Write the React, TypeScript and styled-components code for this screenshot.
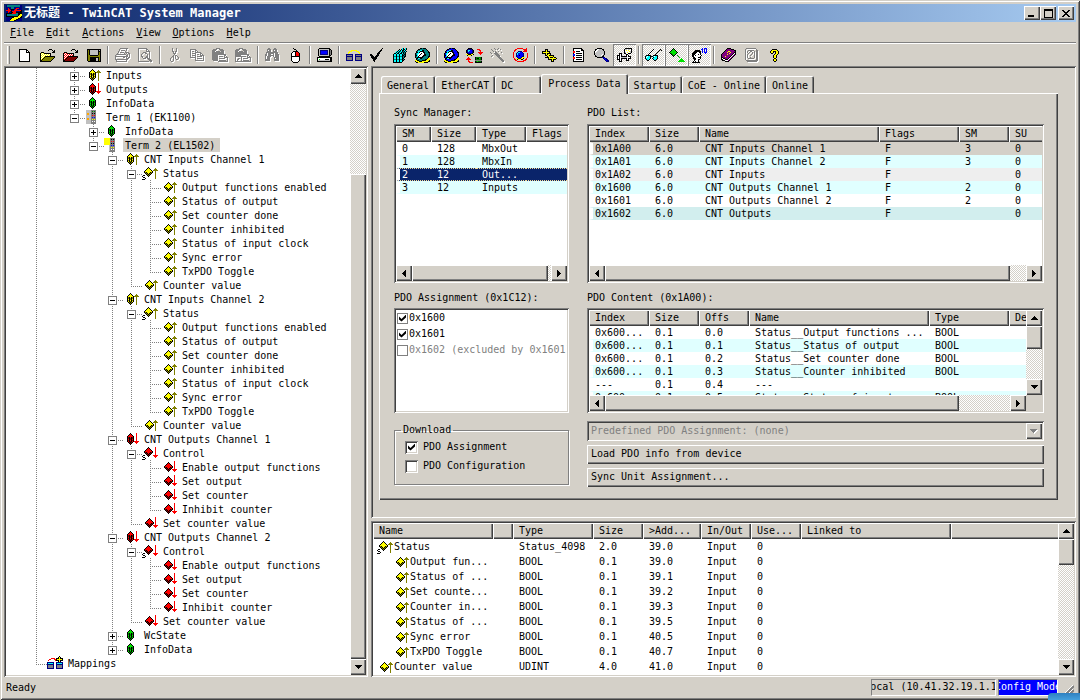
import React from "react";
import styled, { createGlobalStyle, css } from "styled-components";

/* ---------- theme values ---------- */

const face = "#d4d0c8";
const shade = "#808080";
const dark = "#404040";

const raised = css`
  background: ${face};
  box-shadow: inset 1px 1px 0 #fff, inset -1px -1px 0 ${dark}, inset -2px -2px 0 ${shade};
`;
const sunken = css`
  padding: 2px;
  box-shadow: inset 1px 1px 0 ${shade}, inset -1px -1px 0 #fff, inset 2px 2px 0 ${dark}, inset -2px -2px 0 ${face};
`;
const hatch = css`
  background: repeating-conic-gradient(#fff 0 25%, ${face} 0 50%) 0 0 / 2px 2px;
`;

const GlobalStyle = createGlobalStyle`
  *, *::before, *::after { box-sizing: border-box; }
  body { margin: 0; background: ${face}; }
  body, button, input, select {
    font: 10px/14px "DejaVu Sans Mono", "Liberation Mono", "Noto Sans CJK SC", monospace;
    color: #000;
  }
  button { border: 0; padding: 0; }
`;

/* ---------- pixel drawings ---------- */

const inks: Record<string, string> = {
  K: "#000", W: "#fff", Y: "#ffff00", O: "#808000", R: "#ff0000", D: "#800000",
  B: "#0000ff", N: "#000080", C: "#00ffff", T: "#008080", G: "#808080", L: "#c0c0c0",
  g: "#00e000", E: "#008000", P: "#800080", A: "#ffa500",
};

type Palette = Record<string, string>;

const Pixels = ({ rows, palette = {} }: { rows: string[]; palette?: Palette }) => {
  const out: React.ReactElement[] = [];
  rows.forEach((row, y) => {
    let x = 0;
    while (x < row.length) {
      const c = row[x];
      let end = x + 1;
      while (end < row.length && row[end] === c) end++;
      if (c !== "." && c !== " ")
        out.push(<rect key={`${x}-${y}`} x={x} y={y} width={end - x} height={1} fill={palette[c] ?? inks[c]} />);
      x = end;
    }
  });
  return <>{out}</>;
};

const Drawing = styled.svg`
  display: block;
  flex: none;
  shape-rendering: crispEdges;
`;

const widthOf = (rows: string[]) => Math.max(...rows.map((r) => r.length));

const Bitmap = ({ rows, palette, disabled }: { rows: string[]; palette?: Palette; disabled?: boolean }) => {
  const w = widthOf(rows) + (disabled ? 1 : 0);
  const h = rows.length + (disabled ? 1 : 0);
  const white: Palette = {};
  Object.keys(inks).forEach((k) => (white[k] = "#fff"));
  return (
    <Drawing width={w} height={h} viewBox={`0 0 ${w} ${h}`} aria-hidden>
      {disabled && (
        <g transform="translate(1 1)">
          <Pixels rows={rows} palette={white} />
        </g>
      )}
      <Pixels rows={rows} palette={palette} />
    </Drawing>
  );
};

const LEAF = [
  "", "", ".......K", "......K1K", ".....K111K", "....K11111K", "...K1111111K", "...KsK111KsK",
  "....KsK1KsK", ".....KsKsK", "......KsK", ".......K",
];
const STACK = [
  "", ".......K", "......K1K", ".....K111K", "....K11111K", "....KsK1KsK", "....KsKsKsK", "....K1KsK1K",
  "....KsK1KsK", "....K1KsK1K", ".....KsKsK", "......KsK", ".......K",
];
const STRUCT = [
  "", "......K", ".....K1K", "....K111K", "...K11111K", "..K1111111K", "..KsK111KsK", "...KsK1KsK",
  "....KsKsK", ".KK..KsK", "K.....K", ".KK", "...K", "KKK",
];
const UP = [
  "", "", ".............U", "............UUU", "...........UUUUU", ".............U", ".............U",
  ".............U", ".............U", ".............U", ".............U", ".............U", ".............U",
];
const DOWN = [
  "", ".............U", ".............U", ".............U", ".............U", ".............U", ".............U",
  ".............U", ".............U", "...........UUUUU", "............UUU", ".............U",
];
const TERM = [
  "....GGGGGG", "....LGKGKG", "....LGGGGG", "....LGRGRG", "....LGGGGG", "....LGKGKG", "....LGGGGG",
  "....LGBGBG", "....LGGGGG", "....LGYGYG", "....LGGGGG", "....LGWGWG", "....LGGGGG", "....GGGGGG",
];
const COUPLER = [
  "LLLLLGGGGG", "LLLLLGEGEG", "LLLLLGGGGG", "LAALLGKGKG", "LAALLGGGGG", "LLLLLGRGRG", "LLLLLGGGGG",
  "LLLLLGBGBG", "LAALLGGGGG", "LAALLGYGYG", "LLLLLGGGGG", "LLLLLGWGWG", "LLLLLGGGGG", "LLLLLGGGGG",
];
const MAPPINGS = [
  "............K", "...........KYK", "....RRRR.KKKYKKK", "..RR...RRKYYYYYK", ".R......RKKKYKKK",
  "...........KYK", "NNNNNNN..NNNNNNN", "NCCCCCN..NCCCCCN", "NNNNNNN..NNNNNNN", "NGGGGGN..NGGGGGN",
  "NGGGGGN..NGGGGGN", "NGGGGGN..NGGGGGN", "NNNNNNN..NNNNNNN",
];

const faces: Record<string, string> = { y: "#ffff00", r: "#ff0000", g: "#00e000" };
const sides: Record<string, string> = { y: "#808000", r: "#800000", g: "#008000" };

const TreeIcon = ({ kind }: { kind: string }) => {
  const [shape, hue] = kind.split("-");
  const body = ({ leaf: LEAF, stack: STACK, struct: STRUCT } as Record<string, string[]>)[shape];
  return (
    <Drawing width={16} height={14} viewBox="0 0 16 14" aria-hidden>
      {hue === "y" && <Pixels rows={UP} palette={{ U: "#808000" }} />}
      {hue === "r" && <Pixels rows={DOWN} palette={{ U: "#ff0000" }} />}
      {body && <Pixels rows={body} palette={{ "1": faces[hue], s: sides[hue] }} />}
      {shape === "coupler" && <g transform="translate(1 0)"><Pixels rows={COUPLER} /></g>}
      {shape === "term" && (
        <g transform="translate(1 0)">
          <Pixels rows={TERM} />
          <rect x={-1} y={0} width={6} height={7} fill="#ffff00" />
        </g>
      )}
      {shape === "map" && <Pixels rows={MAPPINGS} />}
    </Drawing>
  );
};

const LOGO = [
  "NTTTTTTTTTTTTTNN", "NTTTTTTTTTTTTTNN", "NNNNNTTTNNNNNNNN", "NNRNNTTTNNRRRNNN", "NNRRNKKKNRRNNNNN",
  "RRRRRKNNRRRRRRRK", "NNRRNKRRRRNNNNKK", "NNRNNKKRRRKKKKKK", "KKKKKKRRRRTTKKKK", "KTTTTTTTTTTTKKYY",
  "KTTTTTTTTTTTKYYY", "KKKKKKKKKKKKYYYK", "NNNNNNKKYYYYYYKK", "NNNNNKYYYYYYKKNN", "NNNNKYYYYYKKNNNN", "NNNNYYYYKKNNNNNN",
];

const page = "KWWWWWWWWWK";
const ICONS: Record<string, string[]> = {
  new: ["KKKKKKKK", "KWWWWWWKK", "KWWWWWWKWK", "KWWWWWWKKKK", page, page, page, page, page, page, page, page, "KKKKKKKKKKK"],
  open: [
    ".........KKK", "........K...K.K", ".............KK", ".KKK........KKK", "KYWYKKKKKKK", "KWYWYWYWYWK",
    "KYWYWYWYWYK", "KWYWYKKKKKKKKKK", "KYWYKOOOOOOOOOK", "KWYKOOOOOOOOOK", "KYKOOOOOOOOOK", "KKOOOOOOOOOK", "KKKKKKKKKKK",
  ],
  save: [
    "KKKKKKKKKKKKKK", "KOKLLLLLLLLKLK", "KOKLLLLLLLLKKK", "KOKLLLLLLLLKOK", "KOKLLLLLLLLKOK", "KOKLLLLLLLLKOK",
    "KOOKKKKKKKKOOK", "KOOOOOOOOOOOOK", "KOOKKKKKKKKKOK", "KOOKKKKKKLLKOK", "KOOKKKKKKLLKOK", "KOOKKKKKKLLKOK", ".KKKKKKKKKKKKK",
  ],
  print: [
    ".....GGGGGGGG", "....G......G", "....G.GGGG.G", "...G......G", "...G.GGGG.GGGG", "..G......G.G.GG",
    ".GGGGGGGGGG.G.G", "G..........GG.G", "GGGGGGGGGGGGG.G", "G.......GG.G.GG", "G..........GGG", "GGGGGGGGGGGGG", ".G.........G", ".GGGGGGGGGGG",
  ],
  preview: [
    "GGGGGGGGG", "G.......GG", "G.......G.G", "G.......GGGG", "G....GGG...G", "G...G..GG..G", "G..G.....G.G",
    "G..G.....G.G", "G..GG...GG.G", "G...G..GGG.G", "G....GGG.GGG", "G.........GGG", "G..........GGG", "GGGGGGGGGGG.GG",
  ],
  cut: [
    "..G...G", "..G...G", "..G...G", "..GG.GG", "...G.G", "...GGG", "....G", "...G.GG", "..GG.G.G", ".G.G.G..G",
    "G..G.G..G", "G..G..GG", "G..G", ".GG",
  ],
  copy: [
    "GGGGGG", "G....GG", "G.GG.G.G", "G....GGGGGG", "G.GGGG....GG", "G....G.GG.G.G", "G.GGGG....GGGG", "G....G.GGGGG.G",
    "GGGGGG.......G", ".....G.GGGGG.G", ".....G.......G", ".....GGGGGGGGG",
  ],
  paste: [
    "....GGGG", ".GGGG..GGGG", "GGGG....GGGG", "GGG.GGGG.GGG", "GGGGGGGGGGGG", "GGGGGGGGGGGG", "GGGGGGGGGGGGGG",
    "GGGGGG......GG", "GGGGGG.GGGG.G.G", "GGGGGG......GGGG", "GGGGGG.GGGGGG..G", "GGGGGG.........G", ".GGGGG.GGGGGGG.G", "......GGGGGGGGGG",
  ],
  pasteLink: [
    "....GGGG", ".GGGG..GGGG", "GGGG....GGGG", "GGG.GGGG.GGG", "GGGGGGGGGGGG", "GGGGGGGGGGGG", "GGGGGGGGGGGGGG",
    "GGGGGG......GG", "GGGGGGGGGGG.G.G", "G.....G.....GGGG", "G..GG.G.GGGGG..G", "G.GG..G........G", "G.G...G.GGGGGG.G", "GGGGGGGGGGGGGGGG",
  ],
  find: [
    "...GG....GG", "..GGGG..GGGG", "..G.GG..G.GG", "..GGGG..GGGG", ".GGGGGGGGGGGG", ".G.GGGGGG.GGG", "GG.GGG..G.GGGG",
    "GG.GGGGGG.GGGG", "G.GGGG..G.GGGG", "G.GGG....GGGGG", "G.GGG....G.GGG", "GGGGG....GGGGG", "GGGGG....GGGGG",
  ],
  mouse: [
    "..K", "...KK", ".....K", "..KKKKK", ".KWWKRRK", "KWWWKRRRK", "KWWWKRRRK", "KWWWKRRRK", "KKKKKKKKK", "KWWWWWWWK",
    "KWWWWWWWK", "KWWWWWWWK", "KWWWWWWWK", ".KWWWWWK", "..KKKKK",
  ],
  pc: [
    "..KKKKKKKKKKK", ".KLLLLLLLLLLKK", ".KLNNNNNNNNLKGK", ".KLNBBBBBBNLKGK", ".KLNBBBBBBNLKGK", ".KLNBBBBBBNLKGK",
    ".KLNNNNNNNNLKGK", ".KLLLLLLLLLLKK", "..KKKKKKKKKKK", "KKKKKKKKKKKKKKK", "KWWWWWWWWWWWWKK", "KWgWWWWWKKKKWKK", "KLLLLLLLLLLLLKK", "KKKKKKKKKKKKKKK",
  ],
  link: [
    ".....YYYYYY", "...YYY....YYY", "..YY........YY", "..Y..........Y", "NNNNNNN..NNNNNNN", "NGGGGGN..NGGGGGN",
    "NNNNNNN..NNNNNNN", "NGGGGGN..NGGGGGN", "NGGGGGN..NGGGGGN", "NGGGGGN..NGGGGGN", "NNNNNNN..NNNNNNN",
  ],
  check: [
    "............K", "...........K", "..........KK", ".........KK", "........KK", ".......KKK", "KK.....KK", "KKK...KKK",
    ".KKK.KKK", ".KKKKKK", "..KKKKK", "...KKK", "...KK", "....K",
  ],
  cube: [
    "..........CK.CK", ".......K.KCKKCK", "......KCKCKKCK", "....CKCKTCKTKCK", "...CKCKTCKTKTK", "..KKCKKCKKCKTK", ".KCCKCCKCCKTKK",
    ".KCCKCCKCCKKTK", ".KTTKTTKTTKTKK", ".KCCKCCKCCKTK", ".KCCKCCKCCKK", ".KTTKTTKTTKTK", ".KCCKCCKCCKK", ".KCCKCCKCCK", ".KKKKKKKKK",
  ],
  gear: [
    ".....KKTKKK", "...KKTTTTTTK", "..KTTCCKKTTTK", ".KTCCKKKKTTTTK", ".KKCKWWWKKTTTKK", "KTCCWWKWWKTTTTK", "KTCWWKWWWKKTTTK",
    "KKCWKWWWKKKTTTK", "KTCKWWWKKTTTTKK", "KTKKKKKKTTTTTK", ".KKCCKKTTTTTKYY", ".KTTTTTTTTKKYYY", "YYKKTTTKKKKYYYK", "KYYYKKKYYYYYYKK", ".KKYYYYYYKKKK",
  ],
  reload: [
    "..KKKK", ".KNNNNK....RRR", "KNCCBBNK.....RR", "KNCBBBNK......R", "KNBBBBNK....RRRRR", ".KNNNNK......RRR", "YYKKKYYK......R",
    ".KYYYK", "", "..R......KEEEEEK", ".RRR.....KEKKgEK", "RRRRR....KEEEEEK", "..R......GGGGGGG", "..RR.....KEgEEEK", "...RRRR..KKKKKKK",
  ],
  wand: [
    "....G...G", ".G...G.G..G", "..G.......", "...G.G..G.", "G....GG....G", ".G..GGGG", ".....GGGG", "..G...GGGG",
    ".G.....GGG", "........GGG", ".........GGG", "..........GGG", "...........GGG", "............GG",
  ],
  target: [
    "....RRRRRR...R", "..RR......RRRR", ".RR........RRR", ".R...NNNN.RRRR", "R...NCCBBN", "R..NCBBBBBN...R", "R..NCBBBBBN...R",
    "R..NBBKBBBN...R", "R..NBBBBBNN...R", "R...NBBBNYYY..R", ".R.YYNNNYYK..R", ".RR.KYYYKK..RR", "..RR......RRR", "....RRRRRRR",
  ],
  plus: [
    "...KKK", "...KYK", "KKKKYKKK", "KYYYYYYK", "KKKKYKKKK", "...KYKYYK", "...KKYYKKKKK", ".....KYYYYYK", "...KKKKYKKKYKK",
    "......KYYYYYYYK", "......KKKKYKKK", ".........KYK", ".........KKK",
  ],
  list: [
    "KKKKKKKKK", "KWWWWWWWKK", "KWWWWWWWKKK", "RRWKKKKWWWK", "RRWWWWWWWWK", "KWWKKKKKKWK", "BBWWWWWWWWK", "BBWKKKKKKWK",
    "KWWWWWWWWWK", "RRWKKKKKKWK", "RRWWWWWWWWK", "KWWKKKKKKWK", "KWWWWWWWWWK", "KKKKKKKKKKK",
  ],
  zoom: [
    "...KKKKK", ".KKWWLLLKK", ".KWWLLLLLK", "KWWLLLLLLLK", "KWLLLLLLLLK", "KLLLLLLLLLK", "KLLLLLLLWLK", ".KLLLLLWLK", ".KKLLLLLKK",
    "...KKKKKNNN", ".........NBNN", "..........NBNN", "...........NBNN", "............NNN",
  ],
  tool: [
    "........KKKKKKK", ".......KLLWLLWK", ".......KWYWYWWK", ".......KWWWWYLK", ".......KLWYWWLK", "..KKK..KKWWKKK", "..KWK....KK",
    "KKKWK....KWK", "KWKWKKKKKKWKKK", "KWKWLLLLLLWWWK", "KWKWKKKKKKWKKK", "KKKWK....KWK", "..KWK....KKK", "..KKK",
  ],
  glasses: [
    "........K......K", ".......K......K.K", "......K......K", ".....K......K", "....K......K", "...K......K", ".KKKKK..KKKKK", "KCWCCKKKCWCCK",
    "KWCCCK..KCCCK", "KCCCCK.KCCCCK", ".KCCK...KCCK", "..KK.....KK",
  ],
  watch: [
    "....K", "...KgK", "..KgggK", ".KgggggK", "KgggggggK", ".KEggggK", "..KEggK", "...KEK..E", "....K....E", "..........g",
    "............g", "...........ggg", "..........ggggg", ".........ggggggg",
  ],
  iq: [
    "..........B.BBB", ".........BB.B.B", "...KKKKK..B.B.B", "..KKKKKKK.B.B.B", ".KKKKWWKK.B.BBB", "KKKKWWWWK....B", "KKKWWWKWK", "KKWKWWWWWK",
    "KKWWWWWWK", ".KKWWWKKK", ".KKKWWWWK", "..KKWWKK", "..KWWWK", ".KWKWWK", "KKKKKKKK",
  ],
  book: [
    "......KKKK", ".....KPPPPKKK", "....KPPPPPPPPKK", "...KPPPYYPPPPPK", "..KPPPYPPYPPPKK", ".KPPPPPPYPPPKWK", "KPPPPPYPPPPKWPK",
    "KPPPPPPPPPKWPK", "KPPPYPPPPKWPK", "KKPPPPPPKWPK", "KWKKPPPKWPK", "KKWWKKKWPK", ".KKKWWWPK", "....KKKK",
  ],
  doc: [
    ".GGGGGGGGGG", "G..........G", "G..GGGGGG..GG", "G.G..GG..G.GG", "G.G.G..G.G.GG", "G..G...G.G.GG", "G.G...G..G.GG",
    "G.G..G...G.GG", "G.G......G.GG", "G.G..G...G.GG", "G..GGGGGG..GG", "G..........GG", ".GGGGGGGGGGGG", "..GGGGGGGGGG",
  ],
  help: [
    "..KKKKK", ".KYYYYYK", "KYYKKKYYK", "KYYK.KYYK", ".KK..KYYK", "....KYYK", "...KYYK", "...KYYK", "...KYYK", "....KK",
    "...KYYK", "...KYYK", "....KK",
  ],
};

type Tool = { id: string; label: string; off?: boolean; on?: boolean; palette?: Palette };
const toolGroups: Tool[][] = [
  [
    { id: "new", label: "New" },
    { id: "open", label: "Open" },
    { id: "open", label: "Open from target", palette: { Y: "#ff0000", O: "#800000" } },
    { id: "save", label: "Save" },
  ],
  [{ id: "print", label: "Print", off: true }, { id: "preview", label: "Print preview", off: true }],
  [
    { id: "cut", label: "Cut", off: true },
    { id: "copy", label: "Copy", off: true },
    { id: "paste", label: "Paste", off: true },
    { id: "pasteLink", label: "Paste with links", off: true },
  ],
  [{ id: "find", label: "Find", off: true }, { id: "mouse", label: "Change device" }],
  [{ id: "pc", label: "Choose target system" }],
  [
    { id: "link", label: "Generate mappings" },
    { id: "check", label: "Check configuration" },
    { id: "cube", label: "Activate configuration" },
    { id: "gear", label: "Run mode" },
  ],
  [
    { id: "gear", label: "Config mode", palette: { T: "#0000ff" } },
    { id: "reload", label: "Reload devices" },
    { id: "wand", label: "Scan", off: true },
    { id: "target", label: "Toggle free run" },
  ],
  [{ id: "plus", label: "Append" }],
  [{ id: "list", label: "Show list" }, { id: "zoom", label: "Zoom" }, { id: "tool", label: "Tools", on: true }],
  [
    { id: "glasses", label: "Show online data", on: true },
    { id: "watch", label: "Watch", on: true },
    { id: "iq", label: "Show sub items", on: true },
  ],
  [{ id: "book", label: "Contents" }, { id: "doc", label: "Documentation", off: true }, { id: "help", label: "About" }],
];

/* ---------- window frame ---------- */

const Frame = styled.div`
  display: flex;
  flex-direction: column;
  min-height: 100vh;
  height: 100vh;
  padding: 4px 4px 2px;
  background: ${face};
  box-shadow: inset 1px 1px 0 ${face}, inset -1px -1px 0 ${dark}, inset 2px 2px 0 #fff, inset -2px -2px 0 ${shade};
  overflow: hidden;
  white-space: pre;
`;
const TitleBar = styled.header`
  display: flex;
  align-items: center;
  flex: none;
  height: 18px;
  padding: 0 2px;
  background: linear-gradient(to right, #0a246a, #a6caf0);
`;
const Title = styled.h1`
  flex: 1;
  margin: 0 2px;
  font-size: 12px;
  line-height: 18px;
  color: #fff;
`;
const CaptionButton = styled.button<{ $apart?: boolean }>`
  ${raised}
  display: flex;
  align-items: center;
  justify-content: center;
  width: 16px;
  height: 14px;
  margin-left: ${(p) => (p.$apart ? 2 : 0)}px;
`;
const MenuBar = styled.nav`
  display: flex;
  gap: 12px;
  flex: none;
  height: 22px;
  padding: 3px 6px;
  border-bottom: 1px solid #fff;
  box-shadow: inset 0 -1px 0 ${shade};
`;
const MenuItem = styled.button`
  background: none;
  text-decoration: none;
  &::first-letter {
    text-decoration: underline;
  }
`;
const ToolBar = styled.div`
  display: flex;
  flex: none;
  height: 22px;
  padding-left: 3px;
`;
const Grip = styled.span`
  width: 3px;
  margin: 2px 3px 2px 0;
  border-right: 1px solid ${shade};
  border-left: 1px solid #fff;
`;
const ToolGroup = styled.div`
  display: flex;
  & + &::before {
    content: "";
    width: 2px;
    margin: 2px;
    border-left: 1px solid ${shade};
    border-right: 1px solid #fff;
  }
`;
const ToolButton = styled.button<{ $on?: boolean }>`
  display: flex;
  align-items: center;
  justify-content: center;
  width: 23px;
  height: 22px;
  background: none;
  ${(p) =>
    p.$on &&
    css`
      ${hatch}
      box-shadow: inset 1px 1px 0 ${shade}, inset -1px -1px 0 #fff;
    `}
`;
const Workspace = styled.main`
  display: grid;
  grid-template-columns: 364px minmax(0, 1fr);
  gap: 3px;
  flex: 1;
  min-height: 0;
`;
const RightSide = styled.div`
  display: flex;
  flex-direction: column;
  gap: 3px;
  min-height: 0;
`;

/* ---------- scroll bars ---------- */

const Bar = styled.div<{ $across?: boolean }>`
  ${hatch}
  display: flex;
  flex: none;
  flex-direction: ${(p) => (p.$across ? "row" : "column")};
  ${(p) => (p.$across ? "height: 16px;" : "width: 16px;")}
`;
const ArrowButton = styled.button`
  ${raised}
  display: flex;
  align-items: center;
  justify-content: center;
  flex: none;
  width: 16px;
  height: 16px;
`;
const Thumb = styled.span<{ $size?: number }>`
  ${raised}
  flex: ${(p) => (p.$size ? `0 0 ${p.$size}px` : "1")};
`;
const Space = styled.span<{ $size?: number }>`
  flex: ${(p) => (p.$size !== undefined ? `0 0 ${p.$size}px` : "1")};
`;

const arrows: Record<string, string[]> = {
  up: ["...K", "..KKK", ".KKKKK", "KKKKKKK"],
  down: ["KKKKKKK", ".KKKKK", "..KKK", "...K"],
  left: ["...K", "..KK", ".KKK", "KKKK", ".KKK", "..KK", "...K"],
  right: ["K", "KK", "KKK", "KKKK", "KKK", "KK", "K"],
};

type ScrollProps = { across?: boolean; before?: number; thumb?: number; after?: number };
const ScrollBar = ({ across, before = 0, thumb, after }: ScrollProps) => (
  <Bar $across={across}>
    <ArrowButton aria-label={across ? "Scroll left" : "Scroll up"}>
      <Bitmap rows={across ? arrows.left : arrows.up} />
    </ArrowButton>
    <Space $size={before} />
    <Thumb $size={thumb} />
    <Space $size={after} />
    <ArrowButton aria-label={across ? "Scroll right" : "Scroll down"}>
      <Bitmap rows={across ? arrows.right : arrows.down} />
    </ArrowButton>
  </Bar>
);

/* ---------- tree ---------- */

const TreePane = styled.aside`
  ${sunken}
  display: flex;
  min-height: 0;
  background: #fff;
`;
const TreeList = styled.ul`
  flex: 1;
  min-width: 0;
  margin: 0;
  padding: 0 0 0 21px;
  list-style: none;
  overflow: hidden;
`;
const TreeRow = styled.li`
  display: flex;
  height: 14px;
`;
const TreeLabel = styled.span<{ $selected?: boolean }>`
  margin-left: 3px;
  padding: 1px 5px 0 2px;
  background: ${(p) => (p.$selected ? face : "none")};
`;

const dotsDown = `repeating-linear-gradient(to bottom, ${shade} 0 1px, transparent 1px 2px)`;
const dotsAcross = `repeating-linear-gradient(to right, ${shade} 0 1px, transparent 1px 2px)`;

/* One 19px column of the guide lines: "|" passes through, "t"/"-"/"+" branch, "L"/"m"/"p" are the last branch. */
const Guide = styled.span<{ $kind: string }>`
  display: flex;
  flex: none;
  width: ${(p) => ("| ".includes(p.$kind) ? 19 : 20)}px;
  height: 14px;
  padding: 4px 0 0 5px;
  background-repeat: no-repeat;
  ${(p) => {
    if (p.$kind === " ") return "";
    if (p.$kind === "|") return `background-image: ${dotsDown}; background-size: 1px 14px; background-position: 9px 0;`;
    const reach = "Lmp".includes(p.$kind) ? 9 : 14;
    return `background-image: ${dotsDown}, ${dotsAcross}; background-size: 1px ${reach}px, 11px 1px; background-position: 9px 0, 9px 8px;`;
  }}
`;
const Toggle = styled.button<{ $open: boolean }>`
  width: 9px;
  height: 9px;
  border: 1px solid ${shade};
  background: linear-gradient(#000, #000) center / 5px 1px no-repeat,
    linear-gradient(#000, #000) center / ${(p) => (p.$open ? "0 0" : "1px 5px")} no-repeat, #fff;
`;

type TreeNode = [guides: string, icon: string, label: string];

const branch = (base: string, names: string[], icon: string): TreeNode[] =>
  names.map((n, i) => [base + (i === names.length - 1 ? "L" : "t"), icon, n]);

const inputBits = [
  "Output functions enabled", "Status of output", "Set counter done", "Counter inhibited",
  "Status of input clock", "Sync error", "TxPDO Toggle",
];
const outputBits = ["Enable output functions", "Set output", "Set counter", "Inhibit counter"];

const inputChannel = (n: number): TreeNode[] => [
  ["|   -", "stack-y", `CNT Inputs Channel ${n}`],
  ["|   |-", "struct-y", "Status"],
  ...branch("|   ||", inputBits, "leaf-y"),
  ["|   |L", "leaf-y", "Counter value"],
];
const outputChannel = (n: number): TreeNode[] => [
  ["|   -", "stack-r", `CNT Outputs Channel ${n}`],
  ["|   |-", "struct-r", "Control"],
  ...branch("|   ||", outputBits, "leaf-r"),
  ["|   |L", "leaf-r", "Set counter value"],
];

const treeNodes: TreeNode[] = [
  ["| +", "stack-y", "Inputs"],
  ["| +", "stack-r", "Outputs"],
  ["| +", "stack-g", "InfoData"],
  ["| m", "coupler", "Term 1 (EK1100)"],
  ["|  +", "stack-g", "InfoData"],
  ["|  m", "term", "Term 2 (EL1502)"],
  ...inputChannel(1),
  ...inputChannel(2),
  ...outputChannel(1),
  ...outputChannel(2),
  ["|   +", "stack-g", "WcState"],
  ["|   p", "stack-g", "InfoData"],
  ["L", "map", "Mappings"],
];

const Tree = () => (
  <TreePane>
    <TreeList>
      {treeNodes.map(([guides, icon, label], i) => (
        <TreeRow key={i}>
          {guides.split("").map((g, j) => (
            <Guide key={j} $kind={g}>
              {"+-mp".includes(g) && <Toggle $open={"-m".includes(g)} aria-label={`Toggle ${label}`} />}
            </Guide>
          ))}
          <TreeIcon kind={icon} />
          <TreeLabel $selected={label === "Term 2 (EL1502)"}>{label}</TreeLabel>
        </TreeRow>
      ))}
    </TreeList>
    <ScrollBar before={90} after={0} />
  </TreePane>
);

/* ---------- list views ---------- */

const ListBox = styled.div<{ $height: number }>`
  ${sunken}
  display: flex;
  height: ${(p) => p.$height}px;
  background: #fff;
`;
const ListBody = styled.div`
  display: flex;
  flex-direction: column;
  flex: 1;
  min-width: 0;
`;
const Viewport = styled.div`
  flex: 1;
  min-height: 0;
  overflow: hidden;
`;
const SideBar = styled.div`
  display: flex;
  flex-direction: column;
  background: ${face};
  > :first-child {
    flex: 1;
  }
`;
const Corner = styled.span`
  height: 16px;
`;
const Table = styled.table`
  width: 100%;
  table-layout: fixed;
  border-collapse: separate;
  border-spacing: 0;
`;
const Head = styled.th`
  ${raised}
  height: 16px;
  padding: 0 0 1px 6px;
  font-weight: normal;
  line-height: 13px;
  text-align: left;
  overflow: hidden;
  &:last-child {
    box-shadow: inset 1px 1px 0 #fff, inset 0 -1px 0 ${dark}, inset 0 -2px 0 ${shade};
  }
`;
const Cell = styled.td<{ $height: number }>`
  height: ${(p) => p.$height}px;
  padding: 0 0 0 6px;
  line-height: ${(p) => p.$height - 2}px;
  border: solid transparent;
  border-width: 1px 0;
  &:first-child {
    padding-left: 2px;
    border-left: 4px solid #fff;
  }
`;
const Row = styled.tr<{ $fill?: string; $selected?: boolean }>`
  background: ${(p) => p.$fill ?? "none"};
  ${(p) =>
    p.$selected &&
    css`
      background: #0a246a;
      color: #fff;
      td {
        border-top: 1px dotted #f5db95;
        border-bottom: 1px dotted #f5db95;
      }
    `}
`;

type ListProps = {
  heads: string[];
  widths: number[];
  rows: React.ReactNode[][];
  fills?: (string | undefined)[];
  selected?: number;
  rowHeight?: number;
};
const DataTable = ({ heads, widths, rows, fills = [], selected, rowHeight = 13 }: ListProps) => (
  <Viewport>
    <Table>
      <colgroup>
        {heads.map((_, i) => (
          <col key={i} width={widths[i]} />
        ))}
      </colgroup>
      <thead>
        <tr>
          {heads.map((h, i) => (
            <Head key={i} scope="col">{h}</Head>
          ))}
        </tr>
      </thead>
      <tbody>
        {rows.map((cells, r) => (
          <Row key={r} $fill={fills[r]} $selected={r === selected}>
            {cells.map((c, i) => (
              <Cell key={i} $height={rowHeight}>{c}</Cell>
            ))}
          </Row>
        ))}
      </tbody>
    </Table>
  </Viewport>
);

const aqua = "#e0ffff";

/* ---------- property sheet ---------- */

const Sheet = styled.section`
  ${sunken}
  flex: none;
  padding: 8px 18px 18px 8px;
`;
const TabStrip = styled.div`
  display: flex;
  align-items: flex-end;
  height: 19px;
  padding-left: 2px;
`;
const Tab = styled.button<{ $active?: boolean; $wide?: boolean }>`
  min-width: ${(p) => (p.$wide ? 46 : 0)}px;
  height: 17px;
  padding: 2px 6px 0;
  border-radius: 2px 2px 0 0;
  background: ${face};
  box-shadow: inset 1px 1px 0 #fff, inset -1px 0 0 ${dark}, inset -2px 0 0 ${shade};
  text-align: left;
  ${(p) =>
    p.$active &&
    css`
      height: 20px;
      margin-bottom: -1px;
      padding: 0 7px 1px;
      z-index: 1;
    `}
`;
const SheetPage = styled.div`
  display: grid;
  grid-template-columns: 175px minmax(0, 1fr);
  column-gap: 18px;
  padding: 12px 14px 13px 15px;
  ${raised}
`;
const Column = styled.div`
  display: flex;
  flex-direction: column;
`;
const Caption = styled.div`
  padding-top: 1px;
  margin-bottom: 4px;
  & ~ & {
    margin: 7px 0 3px;
  }
`;
const CheckRow = styled.label<{ $faded?: boolean; $gap: number }>`
  display: flex;
  align-items: center;
  gap: ${(p) => p.$gap}px;
  color: ${(p) => (p.$faded ? shade : "#000")};
`;
const CheckBox = styled.input<{ $flat?: boolean }>`
  appearance: none;
  display: flex;
  align-items: center;
  justify-content: center;
  flex: none;
  width: ${(p) => (p.$flat ? 11 : 13)}px;
  height: ${(p) => (p.$flat ? 11 : 13)}px;
  margin: 0;
  background: #fff;
  ${(p) =>
    p.$flat
      ? css`border: 1px solid ${shade};`
      : css`box-shadow: inset 1px 1px 0 ${shade}, inset -1px -1px 0 #fff, inset 2px 2px 0 ${dark}, inset -2px -2px 0 ${face};`}
  &:checked::after {
    content: "";
    width: 7px;
    height: 7px;
    background: #000;
    clip-path: polygon(0 29%, 36% 64%, 100% 0, 100% 43%, 36% 100%, 0 71%);
  }
`;
const CheckList = styled.div`
  ${sunken}
  display: flex;
  flex-direction: column;
  height: 105px;
  padding-left: 3px;
  background: #fff;
  overflow: hidden;
  ${CheckRow} {
    height: 16px;
    margin-right: -20px;
  }
`;
const ClipBox = styled.div`
  overflow: hidden;
  height: 101px;
`;
const Group = styled.fieldset`
  display: flex;
  flex-direction: column;
  gap: 5px;
  margin: 10px 0 0;
  padding: 3px 10px 11px;
  border: 1px solid ${shade};
  box-shadow: 1px 1px 0 #fff, inset 1px 1px 0 #fff;
`;
const Legend = styled.legend`
  margin-left: -4px;
  padding: 0 2px;
`;
const Combo = styled.div`
  ${sunken}
  display: flex;
  height: 20px;
  margin-top: 8px;
`;
const ComboSelect = styled.select`
  appearance: none;
  flex: 1;
  min-width: 0;
  padding: 0 2px;
  border: 0;
  background: none;
  color: ${shade};
  opacity: 1;
  &:disabled {
    color: ${shade};
    opacity: 1;
  }
`;
const WideButton = styled.button`
  ${raised}
  height: 19px;
  margin-top: 4px;
  padding: 0 4px 1px;
  text-align: left;
`;

const tabs = ["General", "EtherCAT", "DC", "Process Data", "Startup", "CoE - Online", "Online"];

const PropertySheet = () => (
  <Sheet>
    <TabStrip role="tablist">
      {tabs.map((t) => (
        <Tab key={t} role="tab" $active={t === "Process Data"} $wide={t === "DC"} aria-selected={t === "Process Data"}>
          {t}
        </Tab>
      ))}
    </TabStrip>
    <SheetPage>
      <Column>
        <Caption>Sync Manager:</Caption>
        <ListBox $height={159}>
          <ListBody>
            <DataTable
              heads={["SM", "Size", "Type", "Flags"]}
              widths={[35, 45, 50]}
              rows={[["0", "128", "MbxOut", ""], ["1", "128", "MbxIn", ""], ["2", "12", "Out...", ""], ["3", "12", "Inputs", ""]]}
              fills={[undefined, aqua, undefined, aqua]}
              selected={2}
            />
            <ScrollBar across after={3} />
          </ListBody>
        </ListBox>
        <Caption>PDO Assignment (0x1C12):</Caption>
        <CheckList>
          <ClipBox>
            <CheckRow $gap={1}>
              <CheckBox type="checkbox" $flat defaultChecked />0x1600
            </CheckRow>
            <CheckRow $gap={1}>
              <CheckBox type="checkbox" $flat defaultChecked />0x1601
            </CheckRow>
            <CheckRow $gap={1} $faded>
              <CheckBox type="checkbox" $flat disabled />0x1602 (excluded by 0x1601)
            </CheckRow>
          </ClipBox>
        </CheckList>
        <Group>
          <Legend>Download</Legend>
          <CheckRow $gap={5}>
            <CheckBox type="checkbox" defaultChecked />PDO Assignment
          </CheckRow>
          <CheckRow $gap={5}>
            <CheckBox type="checkbox" />PDO Configuration
          </CheckRow>
        </Group>
      </Column>
      <Column>
        <Caption>PDO List:</Caption>
        <ListBox $height={159}>
          <ListBody>
            <DataTable
              heads={["Index", "Size", "Name", "Flags", "SM", "SU"]}
              widths={[60, 50, 180, 80, 50]}
              rows={[
                ["0x1A00", "6.0", "CNT Inputs Channel 1", "F", "3", "0"],
                ["0x1A01", "6.0", "CNT Inputs Channel 2", "F", "3", "0"],
                ["0x1A02", "6.0", "CNT Inputs", "F", "", "0"],
                ["0x1600", "6.0", "CNT Outputs Channel 1", "F", "2", "0"],
                ["0x1601", "6.0", "CNT Outputs Channel 2", "F", "2", "0"],
                ["0x1602", "6.0", "CNT Outputs", "F", "", "0"],
              ]}
              fills={[face, aqua, "#eeeeee", aqua, undefined, "#d2eeee"]}
            />
            <ScrollBar across after={16} />
          </ListBody>
        </ListBox>
        <Caption>PDO Content (0x1A00):</Caption>
        <ListBox $height={105}>
          <ListBody>
            <DataTable
              heads={["Index", "Size", "Offs", "Name", "Type", "De"]}
              widths={[60, 50, 50, 180, 80]}
              rows={[
                ["0x600...", "0.1", "0.0", "Status__Output functions ...", "BOOL", ""],
                ["0x600...", "0.1", "0.1", "Status__Status of output", "BOOL", ""],
                ["0x600...", "0.1", "0.2", "Status__Set counter done", "BOOL", ""],
                ["0x600...", "0.1", "0.3", "Status__Counter inhibited", "BOOL", ""],
                ["---", "0.1", "0.4", "---", "", ""],
                ["0x600...", "0.1", "0.5", "Status__Status of input ...", "BOOL", ""],
              ]}
              fills={[undefined, aqua, undefined, aqua, undefined, aqua]}
            />
            <ScrollBar across after={51} />
          </ListBody>
          <SideBar>
            <ScrollBar thumb={23} />
            <Corner />
          </SideBar>
        </ListBox>
        <Combo>
          <ComboSelect disabled aria-label="Predefined PDO Assignment">
            <option>Predefined PDO Assignment: (none)</option>
          </ComboSelect>
          <ArrowButton disabled aria-label="Open list">
            <Bitmap rows={arrows.down} palette={{ K: shade }} disabled />
          </ArrowButton>
        </Combo>
        <WideButton>Load PDO info from device</WideButton>
        <WideButton>Sync Unit Assignment...</WideButton>
      </Column>
    </SheetPage>
  </Sheet>
);

/* ---------- variable list ---------- */

const VariablePane = styled.section`
  ${sunken}
  display: flex;
  flex: 1;
  min-height: 0;
  background: #fff;
`;
const VariableName = styled.span<{ $depth: number }>`
  display: flex;
  align-items: center;
  gap: 1px;
  height: 13px;
  margin-left: ${(p) => p.$depth * 16 - 2}px;
`;

const name = (icon: string, text: string, depth = 0) => (
  <VariableName $depth={depth}>
    <TreeIcon kind={icon} />
    {text}
  </VariableName>
);
const bit = (text: string, address: string) => [name("leaf-y", text, 1), "", "BOOL", "0.1", address, "Input", "0", "", ""];

const VariableList = () => (
  <VariablePane>
    <DataTable
      heads={["Name", "", "Type", "Size", ">Add...", "In/Out", "Use...", "Linked to", ""]}
      widths={[120, 20, 80, 50, 58, 50, 50, 150]}
      rowHeight={15}
      rows={[
        [name("struct-y", "Status"), "", "Status_4098", "2.0", "39.0", "Input", "0", "", ""],
        bit("Output fun...", "39.0"),
        bit("Status of ...", "39.1"),
        bit("Set counte...", "39.2"),
        bit("Counter in...", "39.3"),
        bit("Status of ...", "39.5"),
        bit("Sync error", "40.5"),
        bit("TxPDO Toggle", "40.7"),
        [name("leaf-y", "Counter value"), "", "UDINT", "4.0", "41.0", "Input", "0", "", ""],
      ]}
    />
    <ScrollBar thumb={26} />
  </VariablePane>
);

/* ---------- status bar ---------- */

const StatusBar = styled.footer`
  display: flex;
  align-items: center;
  gap: 2px;
  flex: none;
  height: 21px;
  padding: 0 2px;
`;
const StatusText = styled.span`
  flex: 1;
`;
const StatusPane = styled.span<{ $width: number; $live?: boolean }>`
  display: flex;
  justify-content: center;
  width: ${(p) => p.$width}px;
  height: 17px;
  border: 1px solid;
  border-color: ${shade} #fff #fff ${shade};
  line-height: 14px;
  overflow: hidden;
  background: ${(p) => (p.$live ? "#0000ff" : "none")};
  color: ${(p) => (p.$live ? "#fff" : "#000")};
`;
const SizeGrip = styled.svg`
  align-self: flex-end;
  margin-left: 1px;
`;
const CornerBadge = styled.span`
  position: fixed;
  right: 0;
  bottom: 0;
  width: 32px;
  height: 7px;
  border-radius: 4px 0 0 0;
  background: linear-gradient(#2f80c0, #45a0dc);
`;

const menus = ["File", "Edit", "Actions", "View", "Options", "Help"];

export default function App() {
  return (
    <Frame>
      <GlobalStyle />
      <TitleBar>
        <Bitmap rows={LOGO} />
        <Title>无标题 - TwinCAT System Manager</Title>
        <CaptionButton aria-label="Minimize">
          <Bitmap rows={["", "", "", "", "", "", "KKKKKK..", "KKKKKK.."]} />
        </CaptionButton>
        <CaptionButton aria-label="Maximize">
          <Bitmap rows={["KKKKKKKKK", "KKKKKKKKK", "K.......K", "K.......K", "K.......K", "K.......K", "K.......K", "K.......K", "KKKKKKKKK"]} />
        </CaptionButton>
        <CaptionButton $apart aria-label="Close">
          <Bitmap rows={["KK....KK", ".KK..KK", "..KKKK", "...KK", "..KKKK", ".KK..KK", "KK....KK"]} />
        </CaptionButton>
      </TitleBar>
      <MenuBar>
        {menus.map((m) => (
          <MenuItem key={m}>{m}</MenuItem>
        ))}
      </MenuBar>
      <ToolBar role="toolbar">
        <Grip />
        {toolGroups.map((group, i) => (
          <ToolGroup key={i}>
            {group.map((t) => (
              <ToolButton key={t.label} $on={t.on} disabled={t.off} aria-label={t.label}>
                <Bitmap rows={ICONS[t.id]} palette={t.palette} disabled={t.off} />
              </ToolButton>
            ))}
          </ToolGroup>
        ))}
      </ToolBar>
      <Workspace>
        <Tree />
        <RightSide>
          <PropertySheet />
          <VariableList />
        </RightSide>
      </Workspace>
      <StatusBar>
        <StatusText>Ready</StatusText>
        <StatusPane $width={125}>Local (10.41.32.19.1.1)</StatusPane>
        <StatusPane $width={60} $live>Config Mode</StatusPane>
        <SizeGrip width={13} height={13} viewBox="0 0 13 13" aria-hidden>
          <path d="M1 13 13 1M5 13 13 5M9 13 13 9" stroke={shade} strokeWidth={2} />
          <path d="M0 12 12 0M4 12 12 4M8 12 12 8" stroke="#fff" />
        </SizeGrip>
      </StatusBar>
      <CornerBadge />
    </Frame>
  );
}
